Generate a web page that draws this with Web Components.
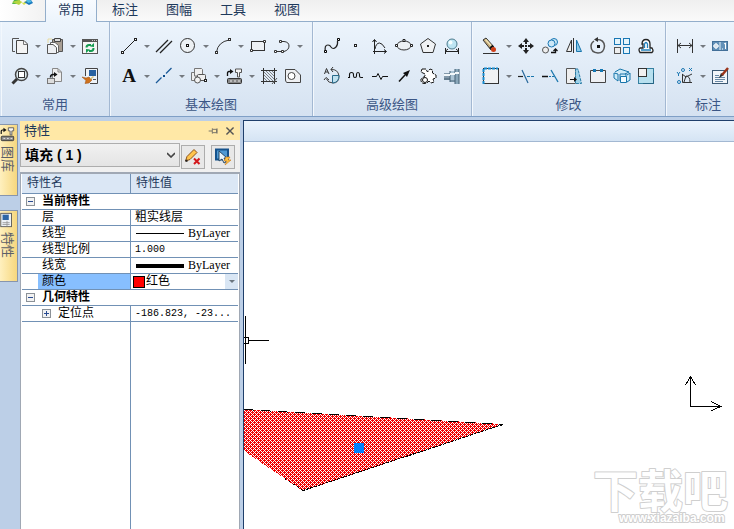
<!DOCTYPE html>
<html lang="zh-CN">
<head>
<meta charset="utf-8">
<meta name="viewport" content="width=device-width, initial-scale=1">
<title>CAD</title>
<style>
html, body { height: 100%; margin: 0; }
body { font-family: "Liberation Sans", "Noto Sans CJK SC", sans-serif; font-size: 13px; color: #1e395b; background: #bccfe7; overflow: hidden; }
</style>
</head>
<body>
<cad-app></cad-app>
<script>
const ICONS = {
copy: '<path d="M8 1.5H1.5V14.5H4" fill="none" stroke="#555"/><path d="M5.5 3.5H13L16.5 7V16.5H5.5Z" fill="#f4f4f4" stroke="#444"/><path d="M12.5 3.5V7.500H16.500" fill="none" stroke="#777"/>',
paste: '<path d="M2 6V2H6" stroke="#e8dba0" fill="none"/><path d="M6.500 2.500V14.500H16.500V2.500Z" fill="#a99f94" stroke="#555"/><path d="M8.500 1.500H14.500V4.500H8.500Z" fill="#ddd" stroke="#444"/><path d="M4.500 5.500H9L12.500 8.500V15.500H4.500Z" fill="#fff" stroke="#666"/><path d="M1.500 7.500H7L10.500 10.500V16.500H1.500Z" fill="#eef0f3" stroke="#555"/>',
refresh: '<rect x="1.500" y="2.500" width="15" height="14" fill="#f5f5f5" stroke="#555"/><path d="M1 2H17V5H1Z" fill="#555"/><path d="M11 3.500H16" stroke="#ccc" stroke-dasharray="1 1"/><path d="M5.500 10.500Q5.500 8 8 8H10M12.500 11Q12.500 14 10 14H8" fill="none" stroke="#149b50" stroke-width="2"/><path d="M9 9.500L13 6V10ZM9 12.500L5 12V16Z" fill="#149b50"/>',
zoom: '<circle cx="10.500" cy="7.500" r="6" fill="#dce9ed" stroke="#444" stroke-width="1.500"/><rect x="7.500" y="4.500" width="6" height="6" fill="#fff" stroke="#333"/><path d="M6 12L1.500 16.500" stroke="#333" stroke-width="3"/>',
extract: '<path d="M6.500 1.500H12L15.500 5V14.500H6.500Z" fill="#eee" stroke="#888"/><path d="M12 2V5H15" fill="none" stroke="#888"/><rect x="1.500" y="11.500" width="7" height="5" fill="#ddd" stroke="#777"/><path d="M4.500 10.500Q4.500 7.500 7 7.500H9" fill="none" stroke="#111" stroke-width="1.500"/><path d="M8 5L11.500 7.500L8 10Z" fill="#111"/>',
brush: '<path d="M4.500 9V1.500H16.500V16.500H9" fill="#eef3f8" stroke="#444"/><rect x="8" y="3" width="7" height="6" fill="#2862a1"/><path d="M12 12.500H15" stroke="#555"/><path d="M1 10L5 11L8 10L11 13L8 16L4 16.500L5 13.500Z" fill="#cf721d" stroke="#9b4b0b" stroke-width=".5"/><path d="M9.500 12L12.500 9.500" stroke="#d8c27b" stroke-width="1.500"/>',
line: '<path d="M3 15L15 3" stroke="#222"/><rect x="1.500" y="14.500" width="2" height="2" fill="#fff" stroke="#222"/><rect x="14.500" y="1.500" width="2" height="2" fill="#fff" stroke="#222"/>',
parallel: '<path d="M1 15L13 3M5 16L17 4" stroke="#222" stroke-width="1.300"/>',
circle: '<circle cx="8.500" cy="8.500" r="7" fill="#edf1f4" stroke="#333"/><rect x="7.500" y="7.500" width="2" height="2" fill="#fff" stroke="#111"/>',
arc: '<path d="M2.500 15Q4 5 15 3" fill="none" stroke="#333"/><rect x="1.500" y="14.500" width="2" height="2" fill="#fff" stroke="#333"/><rect x="14.500" y="1.500" width="2" height="2" fill="#fff" stroke="#333"/>',
rect: '<rect x="2.500" y="4.500" width="13" height="9" fill="#edf1f5" stroke="#333"/><path d="M14.500 3.500h2v2h-2zM1.500 12.500h2v2h-2z" fill="#fff" stroke="#333"/>',
pline: '<path d="M3 14.500H8M8 4.500H11Q16 5 16 9T11 14.500" fill="none" stroke="#333"/><path d="M1.500 13.500h2v2h-2zM8.500 13.500h2v2h-2zM6.500 3.500h2v2h-2z" fill="#fff" stroke="#333"/>',
cline: '<path d="M1 16L6.500 10.500M11 6.500L16.500 1" stroke="#1c5a98" stroke-width="1.300"/><path d="M8 8h2v2H8z" fill="#0b4b8b"/>',
block: '<path d="M1.500 5.500H7L5 13.500H1.500Z" fill="#eee" stroke="#777"/><path d="M4.500 1.500H11.500L12.500 2.500V9H4.500Z" fill="#f0f0f0" stroke="#777"/><rect x="7.500" y="7.500" width="8" height="6" rx="1" fill="#eee" stroke="#555"/><circle cx="7.500" cy="13" r="3" fill="#f2f2f2" stroke="#555"/><rect x="14.500" y="12.500" width="2" height="2" fill="#fff" stroke="#222"/>',
insert: '<path d="M2.500 9V6Q2.500 4.500 4 4.500H6" fill="none" stroke="#111" stroke-width="1.300"/><path d="M5 2L8.500 4.500L5 7Z" fill="#111"/><path d="M10.500 2V5.500H12.500V10H14.500V5.500H16.500V2Z" fill="#f4f4f4" stroke="#555"/><rect x="2.500" y="11.500" width="14" height="5" rx="1" fill="#888" stroke="#333"/><path d="M5 14H15" stroke="#eee" stroke-dasharray="2 2"/>',
hatch: '<path d="M3.500 1V17M1 3.500H17M14.500 1V17M1 14.500H17" stroke="#333"/><path d="M4 5L13 14M4 8L10 14M4 11L7 14M6 4L14 12M9 4L14 9M12 4L14 6" stroke="#666" stroke-width=".8"/><path d="M12 17L17 11" stroke="#555"/>',
region: '<path d="M1.500 2.500H11L16.500 8V15.500H3Q1.500 15 1.500 13Z" fill="#eef0f3" stroke="#444"/><circle cx="7.500" cy="9" r="3.500" fill="#fff" stroke="#444"/>',
spline: '<path d="M2.500 15Q1 8 5 8Q7 8 8 10Q10 13 13 10Q15 8 14.500 4" fill="none" stroke="#222" stroke-width="1.200"/><path d="M1.500 13.500h2v2h-2zM14.500 1.500h2v2h-2z" fill="#fff" stroke="#000"/>',
point: '<rect x="7.500" y="7.500" width="2" height="2" fill="#fff" stroke="#222"/>',
curve: '<path d="M3.500 17V3M2 14.500H15M4 12Q5 6 8.500 6Q11 6 14 11" fill="none" stroke="#222"/><path d="M1.500 5L3.500 2.500L5.500 5M13 12.500L15.500 14.500L13 16.500" fill="none" stroke="#111"/>',
ellipse: '<ellipse cx="9" cy="8.500" rx="7" ry="4.500" fill="#edf1f4" stroke="#333"/><path d="M.5 7.500h2v2h-2zM15.500 7.500h2v2h-2zM8 2.500h2v2H8z" fill="#fff" stroke="#222"/>',
polygon: '<path d="M9 1.500L16.500 7L14 15.500H4L1.500 7Z" fill="#f0f2f4" stroke="#333"/><rect x="8" y="8" width="2" height="2" fill="#222"/>',
bubble: '<circle cx="9" cy="7" r="5" fill="#bde5f3" stroke="#4d7b8d"/><circle cx="7.500" cy="5.500" r="2" fill="#f5feff"/><path d="M2.500 11V17M15.500 11V17M3 14.500H15M5 12L2 14.500M13 12L16 14.500" fill="none" stroke="#222"/>',
detail: '<path d="M8 2.500Q15 2 16 9Q16 16 10 16Q5 16 3.500 12" fill="none" stroke="#444"/><path d="M9.500 8.500H16Q16 15.500 9.500 16Z" fill="#bfe1ef" stroke="#286a8b"/><path d="M1.500 7L3.500 1.500L6 7M2.500 5H5M10 0L8 2.500L10 5M1 13L3 10.500L6 13" fill="none" stroke="#333"/>',
wave: '<path d="M1 10.500H2.500V7.500Q2.500 5.500 4.500 5.500T6.500 7.500V9Q6.500 10.500 8 10.500T9.500 9V7.500Q9.500 5.500 11 5.500T12.500 7.500V9Q12.500 10.500 14 10.500H16" fill="none" stroke="#111" stroke-width="1.100"/>',
break: '<path d="M1 9.500H5.500L7 6.500L10 12.500L11.500 9.500H17" fill="none" stroke="#111"/>',
arrow: '<path d="M4 14.500L10 8" stroke="#111" stroke-width="1.500"/><path d="M15 3L8 6L12 10Z" fill="#111"/>',
gear: '<path d="M3 2H7L8.500 5L11 2L13.500 3V6L17 8V11L14 12L15 15L12 16L10 14Q8 16.500 5 16.500Q1.500 16 2 12L6 9V7L2 5Z" fill="#fff" stroke="#111" stroke-dasharray="4 1"/><circle cx="6" cy="13" r="2.500" fill="#fff" stroke="#111"/>',
shaft: '<path d="M1 6H7V13H1Z" fill="#8399ab"/><path d="M7 4H12V15H7Z" fill="#abc4d5"/><path d="M12 2H16V17H12Z" fill="#8aa7ba"/><path d="M1 12H7M7 14H12M12 2V17M7 4V15M16 2V17" fill="none" stroke="#456174"/><path d="M1 8H7M7 7H12M12 6H16" stroke="#f2f7fa" stroke-width="2"/>',
erase: '<path d="M1 3L4 1L12 10L9 13Z" fill="#c2a878" stroke="#333"/><path d="M3.500 2.500L10 9.500" stroke="#f2e5b8" stroke-width="1.500"/><path d="M8 11.500L11 8.500" stroke="#111" stroke-width="2"/><circle cx="11.500" cy="12.500" r="2.500" fill="#cf3e18"/><path d="M1 16.500H17" stroke="#333"/>',
move: '<path d="M9 1L12 5H6ZM9 17L12 13H6ZM1 9L5 6V12ZM17 9L13 6V12Z" fill="#222"/><path d="M9 5V7M9 11V13M5 9H7M11 9H13" stroke="#222" stroke-width="2"/><rect x="8" y="8" width="2" height="2" fill="#222"/>',
clone: '<circle cx="13" cy="5" r="3.500" fill="#cbe8f6" stroke="#1977b4"/><circle cx="10.500" cy="6.500" r="3.500" fill="#cce7f7" stroke="#1977b4"/><circle cx="4.500" cy="13" r="3" fill="#eee" stroke="#555"/><path d="M10 15.500H14.500V12.500M12.500 14L14.500 12L16.500 14" fill="none" stroke="#111" stroke-width="1.300"/>',
mirror: '<path d="M6.500 3V14.500H1.500Z" fill="#eee" stroke="#333"/><path d="M8.500 1V16" stroke="#333"/><path d="M11.500 3V14.500H16.500Z" fill="#8bc8e7" stroke="#1976ad"/>',
rotate: '<path d="M7 2.500Q15 2 15.500 9Q15 16 9 16Q2 15.500 2 9Q2 6 5 4" fill="none" stroke="#555" stroke-width="1.500"/><path d="M9 0V5L5 2.500Z" fill="#333"/><rect x="8" y="8" width="3" height="3" fill="#111"/>',
array: '<g fill="#e5f4fb" stroke="#1977b4"><rect x="1.500" y="1.500" width="6" height="6"/><rect x="10.500" y="1.500" width="6" height="6"/><rect x="10.500" y="10.500" width="6" height="6"/></g><rect x="1.500" y="10.500" width="6" height="6" fill="#eee" stroke="#555"/>',
offset: '<path d="M3 15.500H15Q17 14 15 11H13V7Q13 2.500 9 2.500T5 7H6V11H3Q1 12 3 15.500Z" fill="#fff" stroke="#222" stroke-width="1.300"/><path d="M4 13H14M7.500 11V7Q9 4 10.500 7V11" fill="none" stroke="#2181bd" stroke-width="1.300"/>',
stretch: '<rect x="1.500" y="1.500" width="15" height="15" fill="#f0f2f4" stroke="#333"/><path d="M1.500 17V1.500H16" fill="none" stroke="#168bd0" stroke-width="2" stroke-dasharray="3 1"/>',
trim: '<path d="M1 9.500H6" stroke="#222" stroke-width="1.200"/><path d="M10 9.500H17" stroke="#1976ad" stroke-dasharray="3 1"/><path d="M5 3L11 16" stroke="#25669a" stroke-width="1.200"/>',
extend: '<path d="M1 9.500H7" stroke="#111" stroke-width="1.500"/><path d="M8 9.500H13" stroke="#1976ad" stroke-dasharray="2 1"/><path d="M10 3L17 15" stroke="#1976ad" stroke-width="1.300"/>',
scale: '<path d="M1.500 1.500H10.500V16.500H1.500Z" fill="#eee" stroke="#555"/><path d="M10.500 2H13L16.500 16.500H10.500Z" fill="#9ed1e8" stroke="#2c7da6" stroke-dasharray="3 1"/><path d="M5 12.500H9" stroke="#111"/><path d="M9 10L12 12.500L9 15Z" fill="#111"/>',
breakat: '<path d="M4 3.500H1.500V15.500H16.500V3.500H14M7 3.500H11" fill="#eef0f3" stroke="#444"/><path d="M4 2H7V5H4ZM11 2H14V5H11Z" fill="#1678b4"/>',
explode: '<path d="M2 5L7 2L16 5L12 7M1 6L5 7V14L1 11ZM14 8L17 6V13L14 15M7 7H13V14H7Z" fill="#ceebf8" stroke="#1775aa"/><path d="M7.500 9.500H13.500V15.500H7.500Z" fill="#f3fbff" stroke="#1775aa"/>',
resize: '<rect x="1.500" y="1.500" width="15" height="15" fill="#b7e0ef" stroke="#3681a1"/><rect x="1.500" y="1.500" width="8" height="8" fill="#f1f1f1" stroke="#333"/><path d="M16.500 6V16.500H6" fill="none" stroke="#256484"/>',
dim: '<path d="M1.500 2V16M16.500 2V16M2 8.500H16M5 6L2 8.500L5 11M13 6L16 8.500L13 11" fill="none" stroke="#333"/>',
tolerance: '<rect x="1.500" y="4.500" width="15" height="9" fill="#6190b8" stroke="#426f98"/><path d="M9 5V13" stroke="#e8f2f9"/><circle cx="5" cy="9" r="2" fill="none" stroke="#fff"/><path d="M2 9H8M5 6V12M11 12H12M13 7L14.500 6V12" stroke="#fff" fill="none"/>',
ordinate: '<path d="M6.500 7V15.500H16M8 15L10 9Q14 9 14 15M6 7L10 10L16 7" fill="none" stroke="#333"/><path d="M1 5L2.500 7L4 5M2.500 7V9M13 1L16 4M16 1L13 4" fill="none" stroke="#1b77b2"/><circle cx="3" cy="15" r="1.500" fill="none" stroke="#1b77b2"/><circle cx="7" cy="3" r="1.500" fill="none" stroke="#1b77b2"/>',
edit: '<rect x="1.500" y="3.500" width="15" height="13" fill="#f2f6fa" stroke="#3c5973"/><path d="M4 8.500H8M4 10.500H14M4 12.500H14M4 14.500H12" stroke="#6888a5"/><path d="M8 11L10 6L13 8Z" fill="#2b2b2b"/><path d="M11 8L17 1" stroke="#9b3419" stroke-width="2.500"/>',
pencil: '<path d="M1.500 13L3 8.500L10 1.500L13 4.500L6 11.500Z" fill="#ffc44d" stroke="#8b5019"/><path d="M1.500 13L3.500 12.500" stroke="#222" stroke-width="2"/><path d="M10 10.500L15.500 16M15.500 10.500L10 16" stroke="#d3181c" stroke-width="2"/>',
pick: '<rect x="2" y="1.500" width="12" height="10" fill="#4f9ad3" stroke="#15528c" stroke-width="2"/><path d="M5 3V13L8 11L10 15L12 14L10 10H13Z" fill="#e8f5fb" stroke="#264867"/><path d="M12 9H16L14 12H17L11 17L13 13H10Z" fill="#ffc446" stroke="#cb7916" stroke-width=".6"/>',
pin: '<path d="M1 9H6M6.500 5V13M7 6.500H13V11.500H7M13.500 5V13" fill="none" stroke="#5c5c5c" stroke-width="1.200"/>',
close: '<path d="M5 5L13 13M13 5L5 13" stroke="#555" stroke-width="1.600"/>',
props: '<rect x="2" y="1.500" width="12" height="15" fill="#eef2f5" stroke="#555"/><rect x="4" y="3" width="7" height="6" fill="#2d65a6"/><path d="M4 12H12M4 14H12M9 10V16" stroke="#999"/>'
};
const svg = (name, size = 18) => `<svg width="${size}" height="${size}" viewBox="0 0 18 18" aria-hidden="true">${ICONS[name]}</svg>`;
const BTN = 'button{border:0;background:none;padding:0;margin:0;font:inherit;color:inherit}svg{display:block;flex:none}';

function define(name, render) {
  customElements.define(name, class extends HTMLElement {
    connectedCallback() {
      if (this.shadowRoot) return;
      this.attachShadow({ mode: 'open' }).innerHTML = render(this);
    }
  });
}

define('tool-button', el => {
  const icon = el.getAttribute('icon');
  const face = icon === 'text' ? '<span>A</span>' : svg(icon);
  return `<style>:host{display:flex;height:30px;flex:none}${BTN}
    button{display:flex;align-items:center;justify-content:center}
    .main{width:24px}.drop{width:11px}
    .drop::before{content:"";border:3px solid transparent;border-top:3px solid #74797f;border-bottom:0}
    span{font:bold 19px "Liberation Serif",serif;color:#111}</style>
    <button class="main" aria-label="${icon}">${face}</button>
    ${el.hasAttribute('split') ? `<button class="drop" aria-label="${icon} menu"></button>` : ''}`;
});

define('ribbon-group', el => {
  const row = key => '<div class="row">' + el.getAttribute(key).split(' ').map(n =>
    `<tool-button icon="${n.replace('+', '')}"${n.endsWith('+') ? ' split' : ''}></tool-button>`).join('') + '</div>';
  return `<style>:host{display:flex;flex-direction:column;flex:none;padding:9px 7px 0;border-right:1px solid #a3b8d2;box-shadow:inset 1px 0 #f3f8fd}
    .row{display:flex}h2{margin:0;font-size:13px;line-height:28px;font-weight:400;text-align:center;color:#3b5685}</style>
    ${row('top')}${row('bottom')}<h2><slot></slot></h2>`;
});

define('app-tabs', () => `<style>:host{display:flex;height:21px;background:linear-gradient(#efefef,#fafafa);border-bottom:1px solid #93aecb}${BTN}
  .logo{width:45px;display:flex;justify-content:center;align-items:start;background:linear-gradient(90deg,#fff,#f2f2f2)}
  nav{display:flex;gap:2px}
  .tab{width:52px;height:22px;line-height:18px;padding-bottom:3px;box-sizing:border-box;border:1px solid transparent;border-width:0 1px}
  .on{background:linear-gradient(#f8fbff,#ecf4fc);border-color:#93aecb}</style>
  <button class="logo" aria-label="menu"><svg width="26" height="6" viewBox="0 0 26 6"><path d="M4 0H10L8 4L2 4Z" fill="#4fb748"/><path d="M2 2L9 5L12 2L9 0Z" fill="#b4d43f"/><path d="M9 0L13 3L17 0H20L14 5Z" fill="#d8e34e"/><path d="M14 2L19 5L23 3L21 0Z" fill="#1675bc"/><path d="M16 0H20L22 2L18 3Z" fill="#50bbe4"/></svg></button>
  <nav><button class="tab on">常用</button><button class="tab">标注</button><button class="tab">图幅</button><button class="tab">工具</button><button class="tab">视图</button></nav>`);

define('side-tab', el => `<style>:host{display:block}${BTN}
  button{width:18px;height:72px;display:flex;flex-direction:column;align-items:center;gap:4px;padding:1px 3px 0 0;box-sizing:border-box;border:1px solid #8795ad;border-left:0;background:linear-gradient(90deg,#fff0be,#f6d77e)}
  span{writing-mode:vertical-rl;text-orientation:sideways;font-size:13px;line-height:14px;color:#5c6069}</style>
  <button>${svg(el.getAttribute('icon'), 16)}<span><slot></slot></span></button>`);

define('property-grid', () => `<style>:host{display:flex;flex-direction:column;flex:1;min-height:0;padding:0 1px;border:1px solid #a0a8b4;border-width:2px 1px 0;background:linear-gradient(#7191b5,#7191b5) 109px 0/1px 100% no-repeat #fff}${BTN}
  table{border-collapse:separate;border-spacing:0;table-layout:fixed;width:100%;font-size:12px;color:#000;line-height:15px}
  th,td{padding:0;height:15px;text-align:left;font-weight:400;border-bottom:1px solid #7191b5;white-space:nowrap;overflow:hidden}
  thead th{height:19px;background:#dbe7f5;color:#1e395b;padding-left:5px}
  thead th:first-child{width:103px;border-right:1px solid #7191b5}
  tbody th{padding-left:20px;border-right:1px solid #7191b5}
  tbody td{padding-left:4px}
  tbody th[colspan]{padding-left:4px;font-weight:700;border-right:0;background:#fff}
  .sel{background:linear-gradient(#87bfff,#87bfff) 16px 0/100% 100% no-repeat}
  .wrap{display:flex;align-items:center;height:15px}
  .exp{width:9px;height:9px;flex:none;border:1px solid #8b9197;background:linear-gradient(90deg,#294b91,#294b91) center/5px 1px no-repeat #f2f2f2;margin-right:7px;box-sizing:border-box}
  .plus{background:linear-gradient(#294b91,#294b91) center/5px 1px no-repeat,linear-gradient(#294b91,#294b91) center/1px 5px no-repeat #f2f2f2}
  .mono{font:10px "Liberation Mono",monospace;line-height:15px}
  .layer{font:12px "Liberation Serif",serif}
  .ln{width:48px;height:1px;background:#000;margin:0 4px 0 1px}.thick{height:4px}
  .sw{width:10px;height:10px;background:red;border:1px solid #000;margin-left:-2px;flex:none}
  select{appearance:none;border:0;background:none;font:inherit;color:#000;flex:1;padding:0 0 0 1px;height:15px;line-height:15px;min-width:0}
  .drop{width:13px;height:15px;background:#d9e6f4;display:flex;align-items:center;justify-content:center}
  .drop::before{content:"";border:3px solid transparent;border-top-color:#6b7680;border-bottom:0}</style>
  <table><thead><tr><th>特性名</th><th>特性值</th></tr></thead><tbody>
  <tr><th colspan="2"><div class="wrap"><button class="exp" aria-label="collapse"></button>当前特性</div></th></tr>
  <tr><th>层</th><td>粗实线层</td></tr>
  <tr><th>线型</th><td><div class="wrap"><i class="ln"></i><span class="layer">ByLayer</span></div></td></tr>
  <tr><th>线型比例</th><td class="mono">1.000</td></tr>
  <tr><th>线宽</th><td><div class="wrap"><i class="ln thick"></i><span class="layer">ByLayer</span></div></td></tr>
  <tr><th class="sel"><label for="colour">颜色</label></th><td><div class="wrap"><i class="sw"></i><select id="colour"><option>红色</option></select><i class="drop"></i></div></td></tr>
  <tr><th colspan="2"><div class="wrap"><button class="exp" aria-label="collapse"></button>几何特性</div></th></tr>
  <tr><th><div class="wrap"><button class="exp plus" aria-label="expand"></button>定位点</div></th><td class="mono">-186.823, -23...</td></tr>
  </tbody></table>`);

define('property-panel', () => `<style>:host{display:flex;flex-direction:column;width:220px;flex:none;background:#f0f0f0}${BTN}
  header{display:flex;align-items:center;height:19px;background:#ffe8a6;padding:0 2px 0 4px}
  h1{margin:0;flex:1;font-size:13px;font-weight:400;line-height:18px}
  header button{width:16px;display:flex;justify-content:center}
  .bar{display:flex;height:32px;padding-top:3px;box-sizing:border-box}
  .combo{width:160px;height:24px;display:flex;align-items:center;border:1px solid #adadad;box-sizing:border-box;background:linear-gradient(#f1f1f1,#e4e4e4)}
  select{appearance:none;border:0;background:none;font:bold 14px "Liberation Sans","Noto Sans CJK SC",sans-serif;color:#000;flex:1;height:22px;line-height:20px;padding:0 0 0 4px}
  .chev{margin-right:4px}
  .acts{display:flex;gap:6px;padding:2px 0 0 1px}
  .act{width:24px;height:24px;box-sizing:border-box;border:1px solid #adadad;background:#e8e8e8;display:flex;align-items:center;justify-content:center}</style>
  <header><h1>特性</h1><button aria-label="pin">${svg('pin', 12)}</button><button aria-label="close">${svg('close', 16)}</button></header>
  <div class="bar"><div class="combo"><select aria-label="对象"><option>填充 ( 1 )</option></select><svg class="chev" width="8" height="6" viewBox="0 0 8 6"><path d="M0 1L4 5L8 1" fill="none" stroke="#444" stroke-width="1.600"/></svg></div><div class="acts"><button class="act" aria-label="edit">${svg('pencil')}</button><button class="act" aria-label="pick">${svg('pick')}</button></div></div>
  <property-grid></property-grid>`);

define('drawing-view', () => {
  const dots = [];
  for (let y = 0; y < 4; y++) for (let x = 0; x < 4; x++)
    if (!((x + y) % 4 === 0 || (x - y + 4) % 4 === 0)) dots.push(`M${x} ${y}h1v1h-1z`);
  return `<style>:host{display:flex;flex-direction:column;flex:1;min-width:0;background:#fff;border:1px solid #1f3f6b;border-width:1px 0 0 1px;position:relative;overflow:hidden}
  .head{height:20px;background:linear-gradient(#eaf3fc,#d5e4f4);border-bottom:1px solid #a3b8d2;flex:none}
  .scene{display:block;width:100%;flex:1;min-height:0}
  .mark{position:absolute;right:0;bottom:0;width:144px;height:80px}</style>
  <div class="head"></div>
  <svg class="scene" shape-rendering="crispEdges" aria-label="drawing"><defs><pattern id="h" width="4" height="4" patternUnits="userSpaceOnUse"><path d="${dots.join('')}" fill="#f00000"/></pattern></defs>
  <path d="M0 267L259 282L59 349L0 309Z" fill="url(#h)"/>
  <path d="M0 267.500L259 282.500" stroke="#000" stroke-dasharray="10 7"/><path d="M259 282.500L59 348.500" stroke="#000" stroke-dasharray="3 1"/><path d="M59 348.500L40 336" stroke="#000" stroke-dasharray="2 3"/>
  <path d="M110 301h10v10h-10z" fill="#0080ff"/>
  <path d="M1.500 174V222M5 198.500H25M-.5 195.500H4.500V201.500H-.5Z" fill="none" stroke="#000"/>
  <path d="M446.500 235V264.500H476M441.500 243L446.500 234.500L451.500 243M467 259.500L476.500 264.500L467 269" fill="none" stroke="#000"/></svg>
  <svg class="mark" viewBox="0 0 144 80"><g fill="#fff" stroke="#cfcfcf" paint-order="stroke" stroke-linejoin="round"><text x="3" y="59" font-family="Noto Sans CJK SC,sans-serif" font-weight="700" font-size="45" stroke-width="2">下载吧</text><text x="29" y="73" font-family="Liberation Sans,sans-serif" font-size="12" font-weight="700" stroke-width="2">www.xiazaiba.com</text></g></svg>`;
});

define('cad-app', () => `<style>:host{display:flex;flex-direction:column;height:100%}
  .ribbon{display:flex;flex:none;height:94px;padding-left:1px;overflow:hidden;background:linear-gradient(#ecf4fc,#d5e2f1);border-bottom:1px solid #7f9fc6}
  main{display:flex;flex:1;min-height:0;padding-top:3px}
  aside{width:20px;flex:none;display:flex;flex-direction:column;gap:14px;padding-top:4px;box-sizing:border-box}
  property-panel{margin:1px 3px 0 0}</style>
  <app-tabs></app-tabs>
  <div class="ribbon">
  <ribbon-group top="copy+ paste+ refresh" bottom="zoom+ extract+ brush">常用</ribbon-group>
  <ribbon-group top="line+ parallel circle+ arc+ rect pline+" bottom="text+ cline+ block+ insert+ hatch region">基本绘图</ribbon-group>
  <ribbon-group top="spline point curve ellipse polygon bubble" bottom="detail wave break arrow gear shaft">高级绘图</ribbon-group>
  <ribbon-group top="erase+ move clone mirror rotate array offset" bottom="stretch+ trim extend scale breakat explode resize">修改</ribbon-group>
  <ribbon-group top="dim+ tolerance+" bottom="ordinate+ edit+">标注</ribbon-group>
  </div>
  <main><aside><side-tab icon="insert">图库</side-tab><side-tab icon="props">特性</side-tab></aside><property-panel></property-panel><drawing-view></drawing-view></main>`);
</script>
</body>
</html>
